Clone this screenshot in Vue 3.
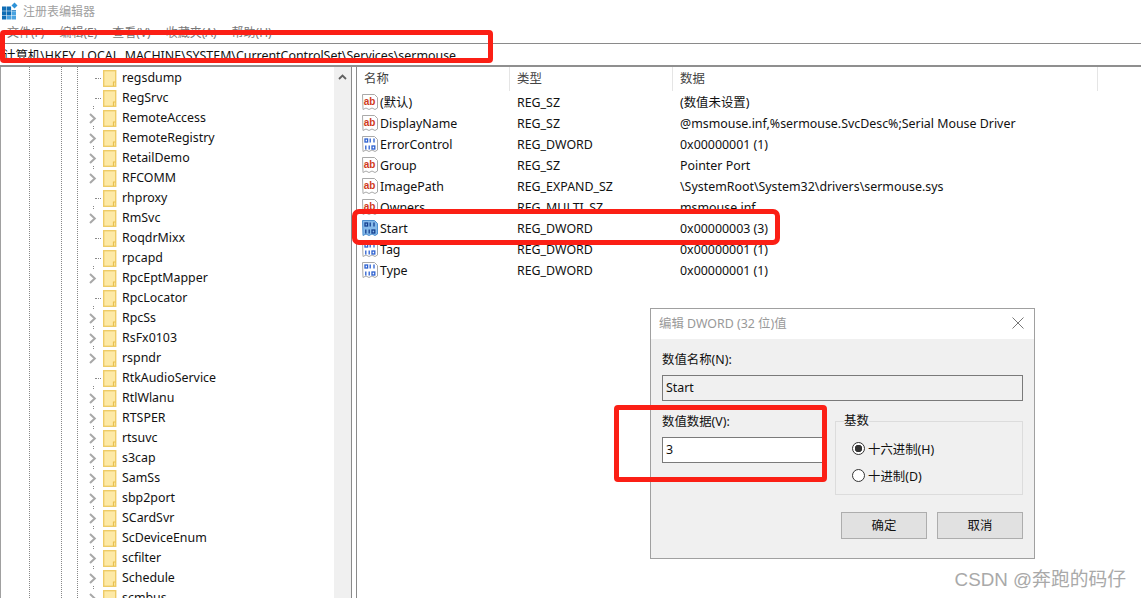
<script setup>
const treeRows = [
  ['regsdump', 0], ['RegSrvc', 0], ['RemoteAccess', 1], ['RemoteRegistry', 1], ['RetailDemo', 1],
  ['RFCOMM', 1], ['rhproxy', 0], ['RmSvc', 1], ['RoqdrMixx', 0], ['rpcapd', 0],
  ['RpcEptMapper', 1], ['RpcLocator', 0], ['RpcSs', 1], ['RsFx0103', 1], ['rspndr', 1],
  ['RtkAudioService', 0], ['RtlWlanu', 1], ['RTSPER', 1], ['rtsuvc', 1], ['s3cap', 1],
  ['SamSs', 1], ['sbp2port', 1], ['SCardSvr', 1], ['ScDeviceEnum', 1], ['scfilter', 1],
  ['Schedule', 1], ['scmbus', 1]
]
const values = [
  ['(默认)', 'REG_SZ', '(数值未设置)', 'ab'],
  ['DisplayName', 'REG_SZ', '@msmouse.inf,%sermouse.SvcDesc%;Serial Mouse Driver', 'ab'],
  ['ErrorControl', 'REG_DWORD', '0x00000001 (1)', 'bin'],
  ['Group', 'REG_SZ', 'Pointer Port', 'ab'],
  ['ImagePath', 'REG_EXPAND_SZ', '\\SystemRoot\\System32\\drivers\\sermouse.sys', 'ab'],
  ['Owners', 'REG_MULTI_SZ', 'msmouse.inf', 'ab'],
  ['Start', 'REG_DWORD', '0x00000003 (3)', 'sel'],
  ['Tag', 'REG_DWORD', '0x00000001 (1)', 'bin'],
  ['Type', 'REG_DWORD', '0x00000001 (1)', 'bin']
]
</script>

<template>
  <div class="page">
    <header class="title">
      <svg class="app-icon" width="18" height="20" viewBox="0 0 18 20">
        <path d="M2 5.500h4.300v4.200H2zM6.800 5.500h4.300v4.200H6.800zM11.600 9h4.400v.7h-4.400zM2 10.200h4.300v4.200H2zM6.800 10.200h4.300v4.200H6.800zM2 14.900h4.300v3.600H2z" fill="#0f6db5"/>
        <path d="M11.600 10.200H16v4.200h-4.400zM6.800 14.900h4.300v3.600H6.800zM11.600 14.900H16v3.600h-4.400z" fill="#4aa3e0"/>
        <path d="M14.500 1.500l3 3-3 3-3-3z" fill="#2f93d8"/>
      </svg>
      <span>注册表编辑器</span>
    </header>
    <nav class="menu">
      <span>文件(F)</span><span>编辑(E)</span><span>查看(V)</span><span>收藏夹(A)</span><span>帮助(H)</span>
    </nav>
    <div class="address">计算机\HKEY_LOCAL_MACHINE\SYSTEM\CurrentControlSet\Services\sermouse</div>

    <main class="panes">
      <section class="tree">
        <div class="tree-list">
          <i class="guide g1"></i><i class="guide g2"></i><i class="guide g3"></i>
          <div v-for="r in treeRows" :key="r[0]" class="tree-row">
            <span class="expander" :class="{ branch: r[1] }">
              <svg v-if="r[1]" width="9" height="11" viewBox="0 0 9 11"><path d="M2 1l4.800 4.500L2 10" fill="none" stroke="#a8a8a8" stroke-width="2"/></svg>
              <i v-else class="tick"></i>
            </span>
            <svg class="folder" width="14" height="17" viewBox="0 0 14 17">
              <rect x=".7" y=".7" width="12" height="15.600" fill="#fde9a6" stroke="#eecb66" stroke-width="1.400"/>
              <path d="M10.500 16v-4h2" fill="none" stroke="#e8c050" stroke-width="1.200"/>
            </svg>
            <span class="tree-label">{{ r[0] }}</span>
          </div>
        </div>
        <div class="scrollbar">
          <svg class="up" width="9" height="6" viewBox="0 0 9 6"><path d="M1 5l3.500-3.500L8 5" fill="none" stroke="#606060" stroke-width="1.800"/></svg>
        </div>
      </section>

      <section class="list">
        <div class="list-head">
          <span class="h1">名称</span><span class="h2">类型</span><span class="h3">数据</span>
        </div>
        <div v-for="v in values" :key="v[0]" class="list-row">
          <span class="c1 name">
            <svg class="val-icon" width="16" height="16" viewBox="0 0 16 16">
              <path d="M.5 .5h12l3 3v10.500l-2.500 1.500-3-1.500-3 1.500-3-1.500-3 1.500z" :fill="v[3] === 'sel' ? '#85baea' : '#fff'" :stroke="v[3] === 'sel' ? '#4d8fcf' : '#a9a9a9'"/>
              <text v-if="v[3] === 'ab'" x="1.800" y="11" class="ab">ab</text>
              <g v-else :stroke="v[3] === 'sel' ? '#143f8f' : '#2a5fd0'" stroke-width="1.300" fill="none">
                <rect x="3" y="3" width="2.600" height="3"/>
                <path d="M8.200 2.400v4.200M12 2.400v4.200M3.800 9.400v4.200M7.200 9.400v4.200"/>
                <rect x="10" y="10" width="2.800" height="3"/>
              </g>
            </svg>
            {{ v[0] }}
          </span>
          <span class="c2">{{ v[1] }}</span>
          <span class="c3">{{ v[2] }}</span>
        </div>
      </section>
    </main>

    <section class="dialog">
      <div class="dlg-title">
        <span>编辑 DWORD (32 位)值</span>
        <svg width="12" height="12" viewBox="0 0 12 12"><path d="M.5.500l11 11M11.500.500l-11 11" stroke="#777" fill="none"/></svg>
      </div>
      <div class="dlg-body">
        <label>数值名称(N):</label>
        <div class="field readonly">Start</div>
        <div class="dlg-mid">
          <div class="value-col">
            <label>数值数据(V):</label>
            <div class="field">3</div>
          </div>
          <fieldset class="base">
            <legend>基数</legend>
            <div class="radio"><i class="dot on"></i>十六进制(H)</div>
            <div class="radio"><i class="dot"></i>十进制(D)</div>
          </fieldset>
        </div>
        <div class="buttons">
          <button>确定</button>
          <button>取消</button>
        </div>
      </div>
    </section>

    <i class="mark mark-address"></i>
    <i class="mark mark-start"></i>
    <i class="mark mark-value"></i>

    <div class="watermark">CSDN @奔跑的码仔</div>
  </div>
</template>

<style>
html, body { margin: 0; overflow: hidden; background: #fff; }
</style>

<style scoped>
.page {
  position: relative;
  width: 1141px;
  height: 598px;
  overflow: hidden;
  background: #fff;
  font-family: "Noto Sans", "Noto Sans CJK SC", sans-serif;
  font-size: 12.400px;
  color: #111;
}
.title {
  height: 22px;
  display: flex;
  align-items: center;
  gap: 5px;
  color: #a0a0a0;
  font-size: 12px;
}
.app-icon { flex: none; }
.menu {
  height: 19px;
  padding: 0 0 2px 7px;
  display: flex;
  gap: 15px;
  align-items: center;
  font-size: 12px;
  color: #777;
  border-bottom: 1px solid #8a8a8a;
}
.address {
  height: 21px;
  line-height: 24px;
  padding-left: 3px;
  white-space: nowrap;
}
.panes {
  display: flex;
  height: 533px;
  box-sizing: border-box;
  border-top: 2px solid #8f8f8f;
}
.tree {
  width: 352px;
  flex: none;
  display: flex;
  border-left: 1px solid #a0a0a0;
  border-right: 1px solid #8a8a8a;
  box-sizing: border-box;
}
.tree-list {
  position: relative;
  flex: 1;
  padding-top: 1px;
  overflow: hidden;
}
.guide {
  position: absolute;
  top: 0;
  bottom: 0;
  width: 0;
  border-left: 1px dotted #888;
}
.g1 { left: 28px; }
.g2 { left: 60px; }
.g3 { left: 76px; }
.tree-row {
  position: relative;
  height: 20px;
  display: flex;
  align-items: center;
  padding-left: 87px;
  white-space: nowrap;
}
.expander {
  position: relative;
  width: 15px;
  align-self: stretch;
  display: flex;
  justify-content: flex-start;
  align-items: center;
}
.expander.branch::before {
  content: "";
  position: absolute;
  left: 5px;
  top: -2px;
  height: 3px;
  border-left: 1px dotted #888;
}
.tick {
  display: block;
  width: 6px;
  margin-left: 7px;
  border-top: 1px dotted #888;
}
.folder { flex: none; }
.tree-label { margin-left: 5px; padding-bottom: 2px; }
.scrollbar {
  position: relative;
  width: 17px;
  flex: none;
  background: #f0f0f0;
}
.up { position: absolute; left: 4px; top: 7px; }
.list {
  flex: 1;
  margin-left: 4px;
  border-left: 1px solid #8a8a8a;
}
.list-head {
  height: 24px;
  display: flex;
  align-items: center;
  color: #444;
}
.list-head span {
  height: 24px;
  line-height: 24px;
  box-sizing: border-box;
  border-right: 1px solid #e5e5e5;
  padding-left: 7px;
}
.h1 { width: 153px; }
.h2 { width: 163px; }
.h3 { width: 425px; }
.list-row {
  height: 21px;
  box-sizing: border-box;
  padding-top: 1px;
  display: flex;
  align-items: center;
  white-space: nowrap;
}
.c1 { width: 153px; flex: none; padding-left: 5px; box-sizing: border-box; }
.c2 { width: 163px; flex: none; padding-left: 7px; box-sizing: border-box; }
.c3 { width: 425px; flex: none; padding-left: 7px; box-sizing: border-box; }
.name { display: flex; align-items: center; gap: 2px; }
.val-icon { flex: none; }
.ab { font: bold 10px "Liberation Sans", sans-serif; fill: #d03a1c; }
.dialog {
  position: absolute;
  left: 650px;
  top: 308px;
  width: 385px;
  height: 251px;
  box-sizing: border-box;
  border: 1px solid #a0a0a0;
  background: #f0f0f0;
  display: flex;
  flex-direction: column;
}
.dlg-title {
  height: 28px;
  padding: 0 10px 2px 8px;
  flex: none;
  background: #fff;
  display: flex;
  align-items: center;
  justify-content: space-between;
  color: #999;
}
.dlg-body {
  padding: 13px 10px 0 11px;
  flex: 1;
}
label { display: block; line-height: 16px; }
.field {
  box-sizing: border-box;
  height: 26px;
  line-height: 23px;
  padding-left: 3px;
  margin-top: 7px;
  border: 1px solid #7a7a7a;
  background: #fff;
}
.readonly { background: #f0f0f0; width: 361px; }
.dlg-mid {
  display: flex;
  gap: 11px;
  margin-top: 13px;
}
.value-col { width: 162px; flex: none; }
.base {
  width: 188px;
  height: 81px;
  box-sizing: border-box;
  margin: 0;
  padding: 7px 0 0;
  border: 1px solid #dcdcdc;
}
.base legend {
  padding: 0;
  margin-left: 8px;
  line-height: 14px;
}
.radio {
  display: flex;
  align-items: center;
  gap: 3px;
  height: 27px;
  padding-left: 16px;
}
.dot {
  width: 11px;
  height: 11px;
  border: 1px solid #333;
  border-radius: 50%;
  background: #fff;
  display: block;
  box-sizing: content-box;
}
.dot.on {
  background: radial-gradient(circle, #333 0 3.500px, #fff 4px);
}
.buttons {
  display: flex;
  justify-content: flex-end;
  gap: 10px;
  margin: 17px 1px 0 0;
}
button {
  width: 86px;
  height: 27px;
  padding: 0 0 2px;
  border: 1px solid #adadad;
  background: #e1e1e1;
  font: inherit;
  color: #111;
}
.mark {
  position: absolute;
  display: block;
  box-sizing: border-box;
  border: 5px solid #fb1f15;
  border-radius: 4px;
}
.mark-address { left: 0; top: 30px; width: 493px; height: 33px; }
.mark-start { left: 352px; top: 209px; width: 428px; height: 36px; border-radius: 7px; }
.mark-value { left: 614px; top: 405px; width: 213px; height: 77px; }
.watermark {
  position: absolute;
  right: 15px;
  bottom: 7px;
  font: 18.800px "Liberation Sans", "Noto Sans CJK SC", sans-serif;
  color: #a9a9a9;
}
</style>
